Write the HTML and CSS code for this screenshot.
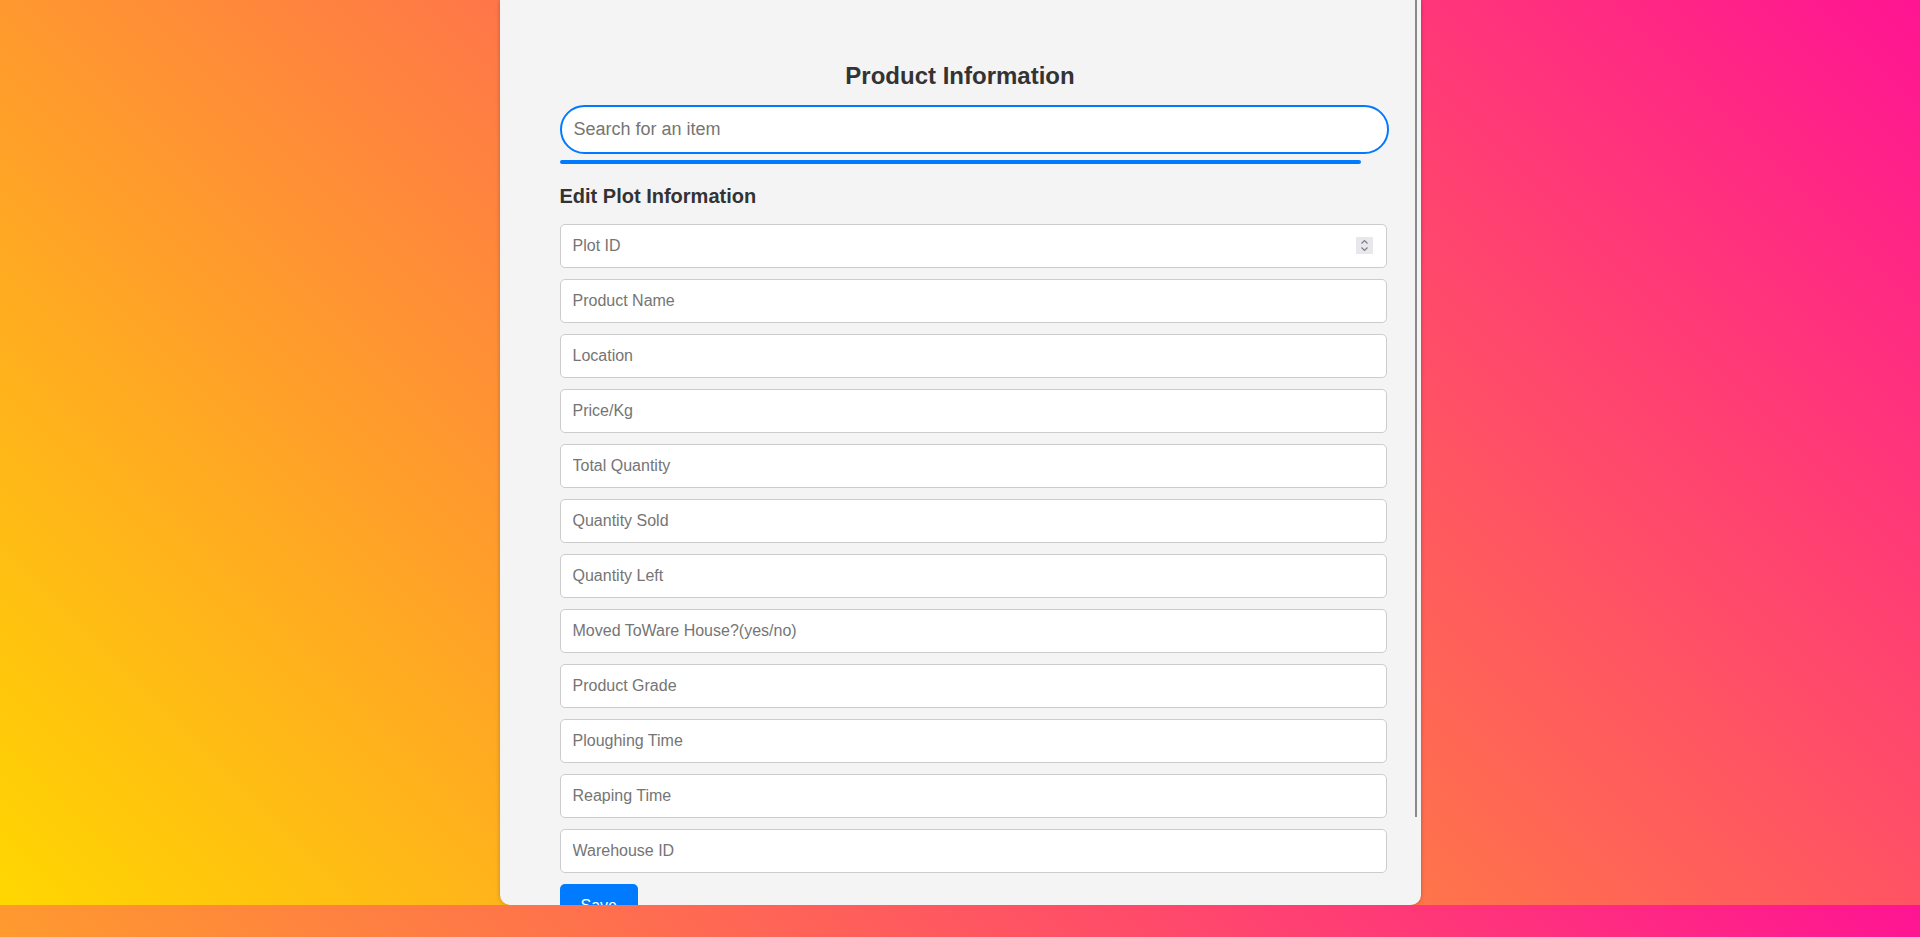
FILE: index.html
```html
<!DOCTYPE html>
<html lang="en">
<head>
<meta charset="utf-8">
<title>Product Information</title>
<link rel="stylesheet" href="styles.css">
</head>
<body>
<div class="page">
  <div class="card">
    <h2 class="title">Product Information</h2>
    <input class="search" type="text" placeholder="Search for an item">
    <div class="search-bar"></div>
    <h3 class="subtitle">Edit Plot Information</h3>
    <form class="form">
      <div class="number-wrap">
        <input class="field" type="number" placeholder="Plot ID">
        <svg class="spinner" width="17" height="17" viewBox="0 0 17 17" aria-hidden="true">
          <rect x="0" y="0" width="17" height="17" fill="#e7e7ec"/>
          <path d="M5.5 6.5 L8.5 3.5 L11.5 6.5" fill="none" stroke="#7d7d86" stroke-width="1.2"/>
          <path d="M5.5 10.5 L8.5 13.5 L11.5 10.5" fill="none" stroke="#7d7d86" stroke-width="1.2"/>
        </svg>
      </div>
      <input class="field" type="text" placeholder="Product Name">
      <input class="field" type="text" placeholder="Location">
      <input class="field" type="text" placeholder="Price/Kg">
      <input class="field" type="text" placeholder="Total Quantity">
      <input class="field" type="text" placeholder="Quantity Sold">
      <input class="field" type="text" placeholder="Quantity Left">
      <input class="field" type="text" placeholder="Moved ToWare House?(yes/no)">
      <input class="field" type="text" placeholder="Product Grade">
      <input class="field" type="text" placeholder="Ploughing Time">
      <input class="field" type="text" placeholder="Reaping Time">
      <input class="field" type="text" placeholder="Warehouse ID">
      <button class="save" type="button">Save</button>
    </form>
  </div>
</div>
</body>
</html>
```
FILE: styles.css
```css
html {
  background: linear-gradient(45deg, #ffd700, #ff1493);
}
body {
  margin: 0;
  font-family: "Liberation Sans", Arial, sans-serif;
}
.page {
  height: 905px;
  display: flex;
  justify-content: center;
}
.card {
  position: relative;
  box-sizing: border-box;
  width: 921px;
  height: 905px;
  padding: 62px 60px 0 60px;
  background: #f4f4f4;
  border-radius: 0 0 10px 10px;
  box-shadow: 0 0 4px rgba(0, 0, 0, 0.25);
  overflow: hidden;
}
.card::after {
  content: "";
  position: absolute;
  top: 0;
  right: 4px;
  width: 2px;
  height: 817px;
  background: #8a8a8a;
}
.title {
  margin: 0 0 15px 0;
  font-size: 24px;
  line-height: 28px;
  font-weight: bold;
  color: #333;
  text-align: center;
}
.search {
  display: block;
  width: 100%;
  height: 45px;
  padding: 0 12px;
  font-family: "Liberation Sans", Arial, sans-serif;
  font-size: 18px;
  border: 2px solid #007bff;
  border-radius: 25px;
  background: #fff;
  outline: none;
}
.search::placeholder {
  color: #757575;
}
.search-bar {
  margin-top: 6px;
  height: 4px;
  border-radius: 2px;
  background: #007bff;
}
.subtitle {
  margin: 21px 0 16px 0;
  font-size: 20px;
  line-height: 23px;
  font-weight: bold;
  color: #333;
}
.form {
  display: flex;
  flex-direction: column;
  align-items: flex-start;
  gap: 11px;
}
.number-wrap {
  position: relative;
  width: 100%;
}
.field {
  display: block;
  width: 100%;
  height: 42px;
  padding: 0 12px;
  font-family: "Liberation Sans", Arial, sans-serif;
  font-size: 16px;
  border: 1px solid #ccc;
  border-radius: 5px;
  background: #fff;
  outline: none;
}
.field::placeholder {
  color: #757575;
}
.field::-webkit-inner-spin-button,
.field::-webkit-outer-spin-button {
  -webkit-appearance: none;
  margin: 0;
}
.spinner {
  position: absolute;
  top: 13px;
  right: -12px;
}
.save {
  padding: 0 21px;
  height: 44px;
  font-family: "Liberation Sans", Arial, sans-serif;
  font-size: 16px;
  color: #fff;
  background: #007bff;
  border: none;
  border-radius: 5px;
}
```
